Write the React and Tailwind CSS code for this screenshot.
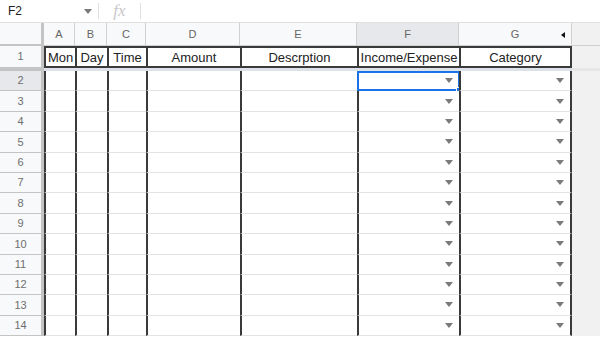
const cols = [
  { key: 'A', w: 'w-[31px]', label: 'Mon', align: 'justify-start pl-[2px]' },
  { key: 'B', w: 'w-[32px]', label: 'Day' },
  { key: 'C', w: 'w-[39px]', label: 'Time' },
  { key: 'D', w: 'w-[94px]', label: 'Amount' },
  { key: 'E', w: 'w-[117px]', label: 'Descrption' },
  { key: 'F', w: 'w-[102px]', label: 'Income/Expense', dd: true },
  { key: 'G', w: 'w-[113px]', label: 'Category', dd: true },
]

const rows = [2, 3, 4, 5, 6, 7, 8, 9, 10, 11, 12, 13, 14]

function Caret() {
  return (
    <svg width="8" height="5" viewBox="0 0 8 5" className="shrink-0">
      <path d="M0 0h8L4 5z" fill="#7a7a7a" />
    </svg>
  )
}

function FormulaBar() {
  return (
    <div className="flex h-[23px] items-center border-b border-[#e0e0e0] bg-white text-[12px] text-[#222]">
      <div className="flex w-[98px] items-center justify-between pl-[8px] pr-[6px]">
        <span>F2</span>
        <Caret />
      </div>
      <div className="h-[16px] w-px bg-[#e0e0e0]" />
      <div className="flex w-[41px] items-center justify-center font-['Liberation_Serif',serif] text-[17px] italic text-[#c8c8c8]">
        fx
      </div>
      <div className="h-[16px] w-px bg-[#e0e0e0]" />
    </div>
  )
}

function HeaderRow() {
  return (
    <div className="flex h-[23px] text-[11px] text-[#666]">
      <div className="w-[44px] shrink-0 border-r-[3px] border-b-[2px] border-[#c4c4c4] bg-[#f8f9fa]" />
      {cols.map((c) => (
        <div
          key={c.key}
          className={`${c.w} relative flex shrink-0 items-center justify-center border-r border-b border-[#d0d0d0] ${c.key === 'F' ? 'bg-[#e6e8eb]' : 'bg-[#f8f9fa]'}`}
        >
          {c.key}
          {c.key === 'G' && (
            <svg width="4" height="6" viewBox="0 0 4 6" className="absolute right-[6px] top-[9px]">
              <path d="M4 0v6L0 3z" fill="#111" />
            </svg>
          )}
        </div>
      ))}
      <div className="flex-1 border-b border-[#d0d0d0] bg-[#f1f1f1]" />
    </div>
  )
}

function TitleRow() {
  return (
    <div className="flex h-[22px] text-[13px] text-[#222]">
      <div className="flex w-[44px] shrink-0 items-center justify-center border-r-[3px] border-b border-[#c4c4c4] bg-[#f8f9fa] text-[11px] text-[#6e6e6e]">
        1
      </div>
      {cols.map((c, i) => (
        <div
          key={c.key}
          className={`${c.w} flex shrink-0 items-center overflow-hidden whitespace-nowrap border-y-2 border-l-2 border-[#3a3a3a] pt-px ${i === cols.length - 1 ? 'border-r-2' : ''} ${c.align || 'justify-center'} bg-white`}
        >
          {c.label}
        </div>
      ))}
      <div className="flex-1 bg-[#f1f1f1]" />
    </div>
  )
}

function FreezeBand() {
  return (
    <div className="flex h-[3px]">
      <div className="w-[44px] shrink-0 bg-[#c4c4c4]" />
      <div className="w-[528px] shrink-0 bg-[#dde1e8]" />
      <div className="flex-1 bg-[#e6e6e6]" />
    </div>
  )
}

function BodyRow({ n }) {
  const selected = n === 2
  return (
    <div className="flex h-[20.4px]">
      <div
        className={`flex w-[44px] shrink-0 items-center justify-center border-r-[3px] border-b border-[#c4c4c4] text-[11px] text-[#6e6e6e] ${selected ? 'bg-[#e6e8eb]' : 'bg-[#f8f9fa]'}`}
      >
        {n}
      </div>
      {cols.map((c, i) => (
        <div
          key={c.key}
          className={`${c.w} relative flex shrink-0 items-center justify-end border-l-2 border-b border-l-[#3a3a3a] border-b-[#e2e2e2] bg-white pr-[6px] ${i === cols.length - 1 ? 'border-r-2 border-r-[#3a3a3a]' : ''}`}
        >
          {c.dd && <Caret />}
          {selected && c.key === 'F' && (
            <>
              <div className="absolute -left-[2px] top-0 -bottom-[1px] -right-[1px] border-2 border-[#1a73e8]" />
              <div className="absolute -bottom-[3px] -right-[3px] h-[6px] w-[6px] border border-white bg-[#1a73e8]" />
            </>
          )}
        </div>
      ))}
      <div className="flex-1 bg-[#f1f1f1]" />
    </div>
  )
}

export default function App() {
  return (
    <div className="h-[338px] w-[600px] overflow-hidden bg-white font-['Liberation_Sans',Arial,sans-serif]">
      <FormulaBar />
      <HeaderRow />
      <TitleRow />
      <FreezeBand />
      {rows.map((n) => (
        <BodyRow key={n} n={n} />
      ))}
    </div>
  )
}
